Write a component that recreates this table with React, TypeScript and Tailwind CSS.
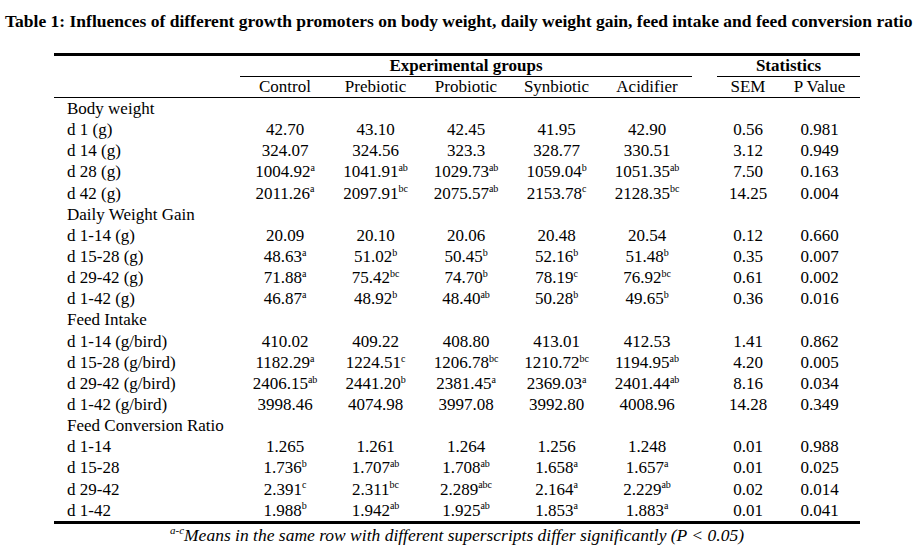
import React from "react";

type Cell = string | [string, string];

interface Row {
  label: string;
  values?: Cell[];
  sem?: string;
  p?: string;
}

const ROWS: Row[] = [
  { label: "Body weight" },
  { label: "d 1 (g)", values: ["42.70", "43.10", "42.45", "41.95", "42.90"], sem: "0.56", p: "0.981" },
  { label: "d 14 (g)", values: ["324.07", "324.56", "323.3", "328.77", "330.51"], sem: "3.12", p: "0.949" },
  { label: "d 28 (g)", values: [["1004.92", "a"], ["1041.91", "ab"], ["1029.73", "ab"], ["1059.04", "b"], ["1051.35", "ab"]], sem: "7.50", p: "0.163" },
  { label: "d 42 (g)", values: [["2011.26", "a"], ["2097.91", "bc"], ["2075.57", "ab"], ["2153.78", "c"], ["2128.35", "bc"]], sem: "14.25", p: "0.004" },
  { label: "Daily Weight Gain" },
  { label: "d 1-14 (g)", values: ["20.09", "20.10", "20.06", "20.48", "20.54"], sem: "0.12", p: "0.660" },
  { label: "d 15-28 (g)", values: [["48.63", "a"], ["51.02", "b"], ["50.45", "b"], ["52.16", "b"], ["51.48", "b"]], sem: "0.35", p: "0.007" },
  { label: "d 29-42 (g)", values: [["71.88", "a"], ["75.42", "bc"], ["74.70", "b"], ["78.19", "c"], ["76.92", "bc"]], sem: "0.61", p: "0.002" },
  { label: "d 1-42 (g)", values: [["46.87", "a"], ["48.92", "b"], ["48.40", "ab"], ["50.28", "b"], ["49.65", "b"]], sem: "0.36", p: "0.016" },
  { label: "Feed Intake" },
  { label: "d 1-14 (g/bird)", values: ["410.02", "409.22", "408.80", "413.01", "412.53"], sem: "1.41", p: "0.862" },
  { label: "d 15-28 (g/bird)", values: [["1182.29", "a"], ["1224.51", "c"], ["1206.78", "bc"], ["1210.72", "bc"], ["1194.95", "ab"]], sem: "4.20", p: "0.005" },
  { label: "d 29-42 (g/bird)", values: [["2406.15", "ab"], ["2441.20", "b"], ["2381.45", "a"], ["2369.03", "a"], ["2401.44", "ab"]], sem: "8.16", p: "0.034" },
  { label: "d 1-42 (g/bird)", values: ["3998.46", "4074.98", "3997.08", "3992.80", "4008.96"], sem: "14.28", p: "0.349" },
  { label: "Feed Conversion Ratio" },
  { label: "d 1-14", values: ["1.265", "1.261", "1.264", "1.256", "1.248"], sem: "0.01", p: "0.988" },
  { label: "d 15-28", values: [["1.736", "b"], ["1.707", "ab"], ["1.708", "ab"], ["1.658", "a"], ["1.657", "a"]], sem: "0.01", p: "0.025" },
  { label: "d 29-42", values: [["2.391", "c"], ["2.311", "bc"], ["2.289", "abc"], ["2.164", "a"], ["2.229", "ab"]], sem: "0.02", p: "0.014" },
  { label: "d 1-42", values: [["1.988", "b"], ["1.942", "ab"], ["1.925", "ab"], ["1.853", "a"], ["1.883", "a"]], sem: "0.01", p: "0.041" },
];

const GROUPS = ["Control", "Prebiotic", "Probiotic", "Synbiotic", "Acidifier"];

// label | 5 groups | spacer | SEM | P value
const GRID = "grid grid-cols-[186px_90px_91px_90px_91px_90px_25px_62px_81px]";

function Value({ cell }: { cell: Cell }) {
  if (typeof cell === "string") return <span>{cell}</span>;
  return (
    <span>
      {cell[0]}
      <sup className="text-[10px] top-[-0.62em]">{cell[1]}</sup>
    </span>
  );
}

export default function App() {
  return (
    <div className="w-[919px] h-[554px] bg-white text-black font-['Liberation_Serif',serif] overflow-hidden">
      {/* Title */}
      <h1 className="pt-[10px] pl-[5px] text-[17.5px] font-bold leading-[23px] whitespace-nowrap">
        Table 1: Influences of different growth promoters on body weight, daily weight gain, feed intake and feed conversion ratio
      </h1>

      <div className="ml-[54px] mt-[20px] w-[806px] text-[17px]">
        <div className="h-[3px] bg-black" />

        {/* Group headers */}
        <div className={`${GRID} h-[21px] font-bold`}>
          <div />
          <div className="col-span-5 border-b border-black text-center leading-[20px]">
            Experimental groups
          </div>
          <div />
          <div className="col-span-2 border-b border-black text-center leading-[20px]">
            Statistics
          </div>
        </div>

        {/* Column headers */}
        <div className={`${GRID} h-[21px] border-b border-black leading-[20px]`}>
          <div />
          {GROUPS.map((g) => (
            <div key={g} className="text-center">
              {g}
            </div>
          ))}
          <div />
          <div className="text-center">SEM</div>
          <div className="text-center">P Value</div>
        </div>

        {/* Body */}
        {ROWS.map((row) => (
          <div key={row.label + (row.sem ?? "")} className={`${GRID} h-[21.15px] leading-[21.15px] whitespace-nowrap`}>
            <div className="pl-[13px]">{row.label}</div>
            {row.values ? (
              <>
                {row.values.map((v, i) => (
                  <div key={i} className="text-center">
                    <Value cell={v} />
                  </div>
                ))}
                <div />
                <div className="text-center">{row.sem}</div>
                <div className="text-center">{row.p}</div>
              </>
            ) : null}
          </div>
        ))}

        <div className="h-[3px] bg-black" />

        {/* Footnote */}
        <p className="text-center italic text-[17.5px] leading-[23px]">
          <sup className="text-[11px] top-[-0.6em]">a-c</sup>Means in the same row with different superscripts differ significantly (P &lt; 0.05)
        </p>
      </div>
    </div>
  );
}
